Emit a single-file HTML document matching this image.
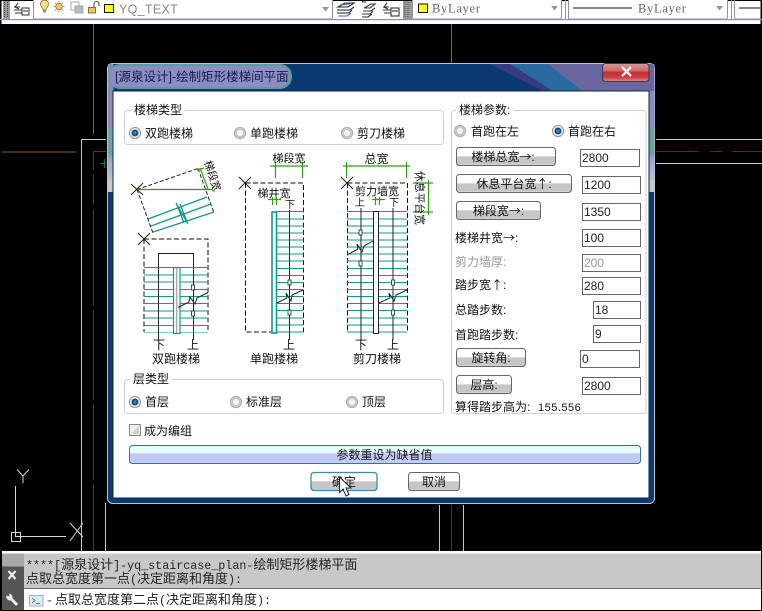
<!DOCTYPE html>
<html>
<head>
<meta charset="utf-8">
<style>
html,body{margin:0;padding:0;background:#000;width:762px;height:611px;overflow:hidden}
svg{display:block;position:absolute;left:0;top:0}
text{font-family:"Liberation Sans","WenQuanYi Zen Hei","Noto Sans CJK SC",sans-serif;font-size:12px;fill:#111}
.m{text-anchor:middle}
.n{font-size:12px;fill:#222}
.a{font-family:"Noto Sans CJK SC","WenQuanYi Zen Hei",sans-serif}
.mono{font-family:"Liberation Mono","WenQuanYi Zen Hei","Noto Sans CJK SC",monospace;font-size:13px;fill:#222}
.lat{font-size:11.700px}
.d{fill:none;stroke:#111;stroke-width:1;stroke-dasharray:5 2.5}
.k{fill:none;stroke:#222;stroke-width:1}
.g{fill:none;stroke:#2ea010;stroke-width:1.2}
.t{stroke:#109a8e;stroke-width:1.3;fill:none}
.tr{shape-rendering:crispEdges}
.inp{fill:#fff;stroke:#666;stroke-width:1}
</style>
</head>
<body>
<svg width="762" height="611" viewBox="0 0 762 611" xmlns="http://www.w3.org/2000/svg">
<defs>
<linearGradient id="bt" x1="0" y1="0" x2="0" y2="1">
<stop offset="0" stop-color="#fff"/><stop offset=".48" stop-color="#fff"/><stop offset=".5" stop-color="#c6c6c6"/><stop offset=".92" stop-color="#c6c6c6"/><stop offset="1" stop-color="#eee"/>
</linearGradient>
<linearGradient id="rb" x1="0" y1="0" x2="0" y2="1">
<stop offset="0" stop-color="#dffcfc"/><stop offset=".42" stop-color="#e8ffff"/><stop offset=".45" stop-color="#c2c6f4"/><stop offset="1" stop-color="#c6caf6"/>
</linearGradient>
<linearGradient id="cl" x1="0" y1="0" x2="0" y2="1">
<stop offset="0" stop-color="#d89a9a"/><stop offset=".4" stop-color="#c86a6a"/><stop offset=".5" stop-color="#c82c30"/><stop offset=".75" stop-color="#c83c40"/><stop offset="1" stop-color="#d88c8c"/>
</linearGradient>
<linearGradient id="ti" x1="0" y1="0" x2="0" y2="1">
<stop offset="0" stop-color="#8c88c4"/><stop offset=".5" stop-color="#9088c0"/><stop offset=".52" stop-color="#6aa49c"/><stop offset=".7" stop-color="#6aa49c"/><stop offset=".75" stop-color="#a8a0d8"/><stop offset=".9" stop-color="#a8c8d0"/><stop offset=".91" stop-color="#c8c8c8"/><stop offset="1" stop-color="#c8c8c8"/>
</linearGradient>
<radialGradient id="on"><stop offset="0" stop-color="#4aa8e0"/><stop offset=".7" stop-color="#0a4a88"/><stop offset="1" stop-color="#0a3a70"/></radialGradient>
<g id="r1"><circle r="5.6" fill="#e4e4e4" stroke="#999"/><circle r="3.4" fill="url(#on)"/></g>
<g id="r0"><circle r="5.6" fill="#d0d0d0" stroke="#aaa"/><circle r="3.6" fill="#f2f2f2" stroke="#bbb" stroke-width=".8"/></g>
</defs>

<!-- CAD background -->
<rect width="762" height="611" fill="#000"/>
<g fill="none" stroke-width="1">
<path d="M93.5 24V134M451.5 24V64M2 152H76" stroke="#8a6d10"/>
<path d="M81.5 551V139.5H106M105.5 503V551M439.5 505V551M463.5 505V551M656 139.5H762M656 163.5H762" stroke="#c8c8c8"/>
<path d="M93.5 551V151.5H106" stroke="#d00000"/>
<path d="M451.5 505V551" stroke="#c80000"/>
<path d="M656 151.5H698M710 151.5H721M732 151.5H762" stroke="#b00000"/>
<path d="M100 163.5H106M104.5 159V168" stroke="#107a20"/>
<!-- UCS -->
<path d="M15.5 486V536.5H66M11.5 532.5H20.5V541.5H11.5ZM17 469.5L23 476L29 469.5M23 476V483M70 523L83 537M83 523L70 541" stroke="#d8d8d8"/>
</g>
<rect x="93" y="170" width="1" height="5" fill="#000"/><rect x="93" y="205" width="1" height="5" fill="#000"/><rect x="93" y="305" width="1" height="5" fill="#000"/><rect x="93" y="400" width="1" height="5" fill="#000"/><rect x="93" y="480" width="1" height="5" fill="#000"/>

<!-- Toolbar -->
<rect x="0" y="0" width="762" height="24" fill="#fff"/>
<rect x="0" y="0" width="1.5" height="24" fill="#000"/>
<rect x="760.5" y="0" width="1.5" height="24" fill="#000"/>
<rect x="0" y="0" width="762" height="1" fill="#000"/>
<rect x="0" y="19" width="762" height="1.2" fill="#8f8dbb"/>
<rect x="3" y="1" width="7" height="18" fill="#999"/>
<path d="M4.5 2V18M7.5 2V18" stroke="#444" stroke-width="1" stroke-dasharray="1 1"/>
<rect x="403" y="1" width="9" height="18" fill="#999"/>
<path d="M405 2V18M408 2V18" stroke="#444" stroke-width="1" stroke-dasharray="1 1"/>
<!-- left icon -->
<g fill="none" stroke="#333" stroke-width="1">
<path d="M14 7H20M14 10H22M15 13H22M18 3L15 7L19 9"/>
<rect x="22" y="8" width="7" height="7" fill="#fff"/>
<path d="M23 11H28"/>
</g>
<!-- layer combo -->
<path d="M33.5 0V17.5Q33.5 19 36 19H330Q332.5 19 332.5 17V0" fill="#fff" stroke="#8f8dbb"/>
<path d="M41 6a4 4 0 1 1 7 0c-1 2-2 2-2 4h-3c0-2-1-2-2-4z" fill="#f6e080" stroke="#857030" stroke-width=".8"/>
<path d="M43 10.5h3v2h-3z" fill="#888"/>
<circle cx="59" cy="6.5" r="3.3" fill="#f0c860" stroke="#a07030" stroke-width=".8"/>
<path d="M59 1V2.4M59 10.6V12M53.5 6.5H55M63 6.5H64.5M55 2.5L56 3.5M62 9.5L63 10.5M55 10.5L56 9.5M62 3.5L63 2.5" stroke="#a07030" stroke-width=".8"/>
<rect x="71" y="2" width="8" height="8" fill="#fff" stroke="#aaa"/>
<rect x="75" y="6" width="8" height="7" fill="#bbb" stroke="#aaa"/>
<rect x="88.500" y="7.500" width="7" height="5.500" fill="#e8c860" stroke="#705020" stroke-width=".8"/>
<path d="M94 7V4a2.500 2.500 0 0 1 5 0V6" fill="none" stroke="#555" stroke-width="1.100"/>
<rect x="104.500" y="4.500" width="9" height="8" fill="#ff0" stroke="#111"/>
<text x="119" y="13.500" style="font-size:12.500px;fill:#8a8a8a;letter-spacing:.3px">YQ_TEXT</text>
<path d="M322 7H329L325.500 11.500Z" fill="#999"/>
<!-- layer state icons -->
<g fill="none" stroke-width="1.100">
<path d="M338 7L345 3H354L348 7ZM337 10H350L354 7M337 13H349L352 10" stroke="#222"/>
<path d="M340 5L350 4M338 16H347L351 13" stroke="#2a6fb8"/>
<path d="M362 2H366M362 2L364 0" stroke="#333"/>
<path d="M366 7L371 4H375L370 8H364ZM363 11H371L375 8M362 14H370L373 11M362 17H368L372 14" stroke="#333"/>
<path d="M383 7H389M383 10H392M384 13H392M387 3L384 7L388 9" stroke="#333"/>
<rect x="391" y="8" width="8" height="8" fill="#fff" stroke="#333"/>
<path d="M392 11H398" stroke="#333"/>
</g>
<!-- color combo -->
<path d="M412.500 0V17.500Q412.500 19 415 19H559Q561.500 19 561.500 17V0" fill="#fff" stroke="#8f8dbb"/>
<rect x="418.500" y="4" width="9" height="8.500" fill="#ff0" stroke="#111"/>
<text x="432" y="12.500" style="font-family:'Liberation Serif',serif;font-size:12.500px;fill:#666;letter-spacing:.7px">ByLayer</text>
<path d="M551 6H558L554.500 10.500Z" fill="#999"/>
<path d="M565.500 0V19" stroke="#8f8dbb"/>
<!-- line combo -->
<path d="M568.500 0V17.500Q568.500 19 571 19H725Q727.500 19 727.500 17V0" fill="#fff" stroke="#8f8dbb"/>
<path d="M573 8H632" stroke="#111"/>
<text x="638" y="12.500" style="font-family:'Liberation Serif',serif;font-size:12.500px;fill:#666;letter-spacing:.7px">ByLayer</text>
<path d="M716 6H723L719.500 10.500Z" fill="#999"/>
<path d="M731.500 0V19M734.500 0V17.500Q734.500 19 737 19H760" stroke="#8f8dbb" fill="none"/>
<path d="M739 8H760" stroke="#111"/>

<!-- Dialog frame -->
<rect x="107.500" y="63.500" width="547" height="440" rx="5" fill="#0a3a70" stroke="#b8c4d8"/>
<rect x="108" y="64" width="5.500" height="128" fill="url(#ti)"/>
<rect x="649" y="64" width="5.500" height="128" fill="url(#ti)"/>
<!-- title right decoration -->
<path d="M490 64L543 91H654V70Q654 64 650 64Z" fill="#3a3a80"/>
<path d="M510 64L553 91H654V70Q654 64 650 64Z" fill="#2a6aa0"/>
<path d="M548 64L582 91H654V70Q654 64 650 64Z" fill="#6a66a0"/>
<!-- title pill -->
<rect x="108" y="64" width="184" height="25" rx="12" fill="#5a9ca0"/>
<rect x="109" y="66" width="180" height="21" rx="10" fill="#8f8cc4"/>
<text x="115" y="81" style="font-size:12.500px;fill:#10204a">[源泉设计]-绘制矩形楼梯间平面</text>
<!-- close -->
<rect x="602.500" y="63.500" width="46.500" height="18" rx="3" fill="url(#cl)" stroke="#3a3a4a"/>
<path d="M622 67L631 76M631 67L622 76" stroke="#eee" stroke-width="2.400"/>
<!-- client -->
<rect x="113" y="91" width="536" height="407" fill="#fff" stroke="#0a2a40" stroke-width="1"/>

<!-- group 1 -->
<rect x="124.500" y="110.500" width="319" height="34" rx="3" fill="#fff" stroke="#d0d0d0"/>
<rect x="131" y="104" width="54" height="12" fill="#fff"/>
<text x="134" y="114">楼梯类型</text>
<use href="#r1" x="135" y="133"/><text x="145" y="137.500">双跑楼梯</text>
<use href="#r0" x="240" y="133"/><text x="250" y="137.500">单跑楼梯</text>
<use href="#r0" x="347" y="133"/><text x="357" y="137.500">剪刀楼梯</text>

<!-- Stair 1 -->
<g>
<path class="k" d="M137 189.500L198 168.500M137 189.500L153 233M198 168.500L214 213" stroke-dasharray="4 2"/>
<path class="t" d="M148 219L207 197M151 226L211 204M153 232L214 212M177 205L184 223M180 204L187 222M176 203L188 224" stroke="#109a8e"/>
<path class="g" d="M136 189.500H212M200 168L208 189M197 170L204 168"/>
<path class="k" d="M131 184L143 195M131 195L143 183"/>
<text class="m" transform="translate(209 177) rotate(72)" style="font-size:10.500px">梯段宽</text>
<path class="k" d="M138 233L150 245M138 245L150 233"/>
<path class="d" d="M144 239H208V332M144 239V332"/>
<line class="tr" x1="176" x2="176" y1="267.200" y2="332.500" stroke="#0f9a8c" stroke-width="64" stroke-dasharray="1 6.200"/>
<path d="M158.500 340V253.500H193.500V340" class="k"/>
<rect x="173.500" y="267.500" width="6.500" height="66" fill="#fff" stroke="#109a8e" stroke-width="1.200"/>
<path d="M176.800 268V333" stroke="#888"/>
<rect x="191.500" y="285" width="3" height="5" fill="#fff" stroke="#222" stroke-width=".8"/>
<rect x="191.500" y="311" width="3" height="5" fill="#fff" stroke="#222" stroke-width=".8"/>
<path class="k" d="M178 307.500L189 302L190 297L195 304L197 298L208 292.500"/>
<text class="m" x="159" y="349">下</text><text class="m" x="193" y="349">上</text>
<text class="m" x="176" y="363">双跑楼梯</text>
</g>

<!-- Stair 2 -->
<g>
<path class="g" d="M270 166H308M275.500 162V178M302.500 162V178"/>
<text class="m" x="289" y="162" style="font-size:11px">梯段宽</text>
<path class="k" d="M239 177L251 189M239 189L251 177"/>
<path class="d" d="M245.500 183H303.500V332M245.500 183V332H272"/>
<text class="m" x="274" y="197" style="font-size:11px">梯井宽</text>
<path class="g" d="M268 199.500H281M272.500 197V205M276.500 197V205"/>
<line class="tr" x1="290" x2="290" y1="211.200" y2="332.500" stroke="#0f9a8c" stroke-width="27" stroke-dasharray="1 6.070"/>
<rect x="272" y="212" width="4.500" height="121" fill="#fff" stroke="#109a8e" stroke-width="1.600"/>
<path class="k" d="M289.500 210V340"/>
<text class="m" x="290" y="208" style="font-size:10px">下</text>
<rect x="288" y="280" width="3" height="5" fill="#fff" stroke="#222" stroke-width=".8"/>
<rect x="288" y="310" width="3" height="5" fill="#fff" stroke="#222" stroke-width=".8"/>
<path class="k" d="M277 303L287 298L286 293L291 301L292 295L303 290"/>
<text class="m" x="289" y="349">上</text>
<text class="m" x="274" y="363">单跑楼梯</text>
</g>

<!-- Stair 3 -->
<g>
<path class="g" d="M343 166H410M346.500 162V178M406.500 162V178"/>
<text class="m" x="376.500" y="163">总宽</text>
<path class="k" d="M341 177L353 189M341 189L353 177"/>
<path class="d" d="M347.500 183H407.500V332M347.500 183V332"/>
<text class="m" x="377" y="195" style="font-size:11px">剪力墙宽</text>
<path class="g" d="M372 199.500H385M375.500 197V205M379.500 197V205"/>
<text class="m" x="360" y="206" style="font-size:10px">上</text>
<text class="m" x="394" y="206" style="font-size:10px">下</text>
<line class="tr" x1="377" x2="377" y1="211.200" y2="332.500" stroke="#0f9a8c" stroke-width="60" stroke-dasharray="1 6.070"/>
<rect x="373.500" y="211.500" width="5" height="122" fill="#fff" stroke="#222"/>
<path class="k" d="M361 208V340M393 208V340"/>
<rect x="359" y="230" width="3" height="5" fill="#fff" stroke="#222" stroke-width=".8"/>
<rect x="359" y="261" width="3" height="5" fill="#fff" stroke="#222" stroke-width=".8"/>
<rect x="391.500" y="280" width="3" height="5" fill="#fff" stroke="#222" stroke-width=".8"/>
<rect x="391.500" y="310" width="3" height="5" fill="#fff" stroke="#222" stroke-width=".8"/>
<path class="k" d="M347 255L358 249L357 244L362 252L364 246L373 241"/>
<path class="k" d="M379 303L390 298L389 293L394 301L396 295L407 290"/>
<text class="m" x="361" y="349">下</text><text class="m" x="393" y="349">上</text>
<text class="m" x="377" y="363">剪刀楼梯</text>
<path class="g" d="M413 183H433M413 212H433M428.500 180V215"/>
<text transform="translate(416 171) rotate(90)" style="font-size:10.800px">休息平台宽</text>
</g>

<!-- group 2 -->
<rect x="124.500" y="379.500" width="319" height="34" rx="3" fill="#fff" stroke="#d0d0d0"/>
<rect x="130" y="373" width="42" height="12" fill="#fff"/>
<text x="133" y="383">层类型</text>
<use href="#r1" x="135" y="402"/><text x="145" y="406">首层</text>
<use href="#r0" x="236" y="402"/><text x="246" y="406">标准层</text>
<use href="#r0" x="352" y="402"/><text x="362" y="406">顶层</text>

<rect x="129.500" y="424.500" width="11" height="11" fill="#eee" stroke="#888"/>
<path d="M131 434L139 426V434Z" fill="#d0d0d0"/>
<text x="144" y="435">成为编组</text>

<rect x="129.500" y="445.500" width="511" height="18" rx="3" fill="url(#rb)" stroke="#3a7090"/>
<text class="m" x="384.500" y="459">参数重设为缺省值</text>

<rect x="311" y="472.500" width="66" height="18" rx="3" fill="url(#bt)" stroke="#3a88c0" stroke-width="1.300"/>
<text class="m" x="344" y="486">确定</text>
<rect x="408.500" y="472.500" width="51" height="18" rx="3" fill="url(#bt)" stroke="#666"/>
<text class="m" x="434" y="486">取消</text>
<path d="M339.500 477V492.500L343 489L346 496L349 494.500L346 488H351Z" fill="#fff" stroke="#223" stroke-width="1"/>

<!-- right group -->
<rect x="451.500" y="110.500" width="194.500" height="303" rx="3" fill="#fff" stroke="#d0d0d0"/>
<rect x="456" y="104" width="58" height="12" fill="#fff"/>
<text x="459" y="114">楼梯参数:</text>
<use href="#r0" x="460" y="131"/><text x="471" y="135.500">首跑在左</text>
<use href="#r1" x="558" y="131"/><text x="568" y="135.500">首跑在右</text>

<rect x="456.500" y="147.500" width="99" height="18" rx="3" fill="url(#bt)" stroke="#666"/>
<text class="m" x="503" y="161">楼梯总宽<tspan class="a">→</tspan>:</text>
<rect x="456.500" y="174.500" width="115" height="18" rx="3" fill="url(#bt)" stroke="#666"/>
<text class="m" x="514" y="188">休息平台宽<tspan class="a">↑</tspan>:</text>
<rect x="456.500" y="201.500" width="84" height="18" rx="3" fill="url(#bt)" stroke="#666"/>
<text class="m" x="498.500" y="215">梯段宽<tspan class="a">→</tspan>:</text>
<rect x="456.500" y="348.500" width="69" height="18" rx="3" fill="url(#bt)" stroke="#666"/>
<text class="m" x="491" y="362">旋转角:</text>
<rect x="456.500" y="375.500" width="55" height="18" rx="3" fill="url(#bt)" stroke="#666"/>
<text class="m" x="484" y="389">层高:</text>

<rect class="inp" x="580.500" y="149.500" width="59" height="17"/><text class="n" x="582" y="162">2800</text>
<rect class="inp" x="582.500" y="176.500" width="58" height="17"/><text class="n" x="584" y="189">1200</text>
<rect class="inp" x="582.500" y="203.500" width="58" height="17"/><text class="n" x="584" y="216">1350</text>
<rect class="inp" x="582.500" y="229.500" width="58" height="17"/><text class="n" x="584" y="242">100</text>
<rect class="inp" x="582.500" y="254.500" width="58" height="17"/><text class="n" x="584" y="267" style="fill:#999">200</text>
<rect class="inp" x="582.500" y="277.500" width="58" height="17"/><text class="n" x="584" y="290">280</text>
<rect class="inp" x="593.500" y="301.500" width="47" height="17"/><text class="n" x="595" y="314">18</text>
<rect class="inp" x="593.500" y="325.500" width="47" height="17"/><text class="n" x="595" y="338">9</text>
<rect class="inp" x="580.500" y="350.500" width="59" height="17"/><text class="n" x="582" y="363">0</text>
<rect class="inp" x="582.500" y="377.500" width="58" height="17"/><text class="n" x="584" y="390">2800</text>

<text x="455" y="242">楼梯井宽<tspan class="a">→</tspan>:</text>
<text x="455" y="266" style="fill:#999">剪力墙厚:</text>
<text x="455" y="289">踏步宽<tspan class="a">↑</tspan>:</text>
<text x="455" y="314">总踏步数:</text>
<text x="455" y="339">首跑踏步数:</text>
<text x="455" y="411">算得踏步高为:</text>
<text x="538" y="411" style="font-size:11px;letter-spacing:.5px">155.556</text>

<!-- Command line -->
<rect x="0" y="551" width="762" height="60" fill="#000"/>
<rect x="2" y="551" width="759" height="2.500" fill="#fff"/>
<rect x="2" y="553.500" width="759" height="35" fill="#c8c8c8"/>
<rect x="2" y="553.500" width="22" height="13" fill="#a8a8a8"/>
<rect x="2" y="566.500" width="22" height="43.500" fill="#555"/>
<rect x="24" y="588" width="737" height="1.200" fill="#666"/>
<rect x="24" y="589" width="737" height="21" fill="#fff"/>
<path d="M8.500 571L15.500 579M15.500 571L8.500 579" stroke="#eee" stroke-width="2.200"/>
<path d="M10.500 598L17 605" stroke="#eee" stroke-width="2.800" fill="none"/>
<path d="M6.500 595.500A3.800 3.800 0 0 0 12 600L12.500 597A3.800 3.800 0 0 0 9 593.500L9.500 596.500Z" fill="#eee"/>
<text class="mono" x="26" y="569"><tspan class="lat">****[</tspan>源泉设计<tspan class="lat">]-yq_staircase_plan-</tspan>绘制矩形楼梯平面</text>
<text class="mono" x="26" y="583">点取总宽度第一点<tspan class="lat">(</tspan>决定距离和角度<tspan class="lat">):</tspan></text>
<rect x="29.500" y="595.500" width="13.500" height="10.500" fill="#d8eef0" stroke="#aac"/>
<path d="M32 598L35 600.500L32 603M36 603.500H40" fill="none" stroke="#557" stroke-width=".8"/>
<path d="M47 600H52L49.500 602.500Z" fill="#999"/>
<text class="mono" x="55" y="604">点取总宽度第二点<tspan class="lat">(</tspan>决定距离和角度<tspan class="lat">):</tspan></text>
</svg>
</body>
</html>
